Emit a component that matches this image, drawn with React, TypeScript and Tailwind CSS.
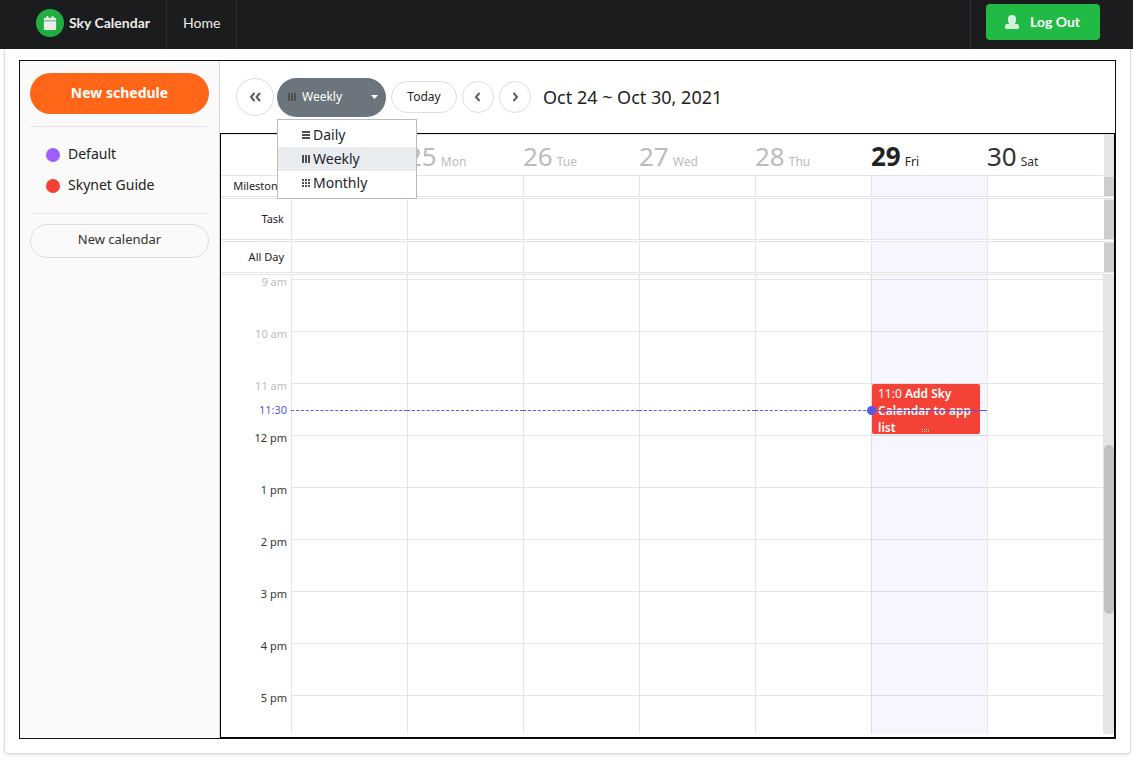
import React from "react";
import { FaCalendar } from "react-icons/fa";

type Day = { date: number; name: string };

const days: Day[] = [
  { date: 24, name: "Sun" },
  { date: 25, name: "Mon" },
  { date: 26, name: "Tue" },
  { date: 27, name: "Wed" },
  { date: 28, name: "Thu" },
  { date: 29, name: "Fri" },
  { date: 30, name: "Sat" },
];

const TODAY = 29;

const hours = ["9 am", "10 am", "11 am", "12 pm", "1 pm", "2 pm", "3 pm", "4 pm", "5 pm"];

function UserIcon() {
  return (
    <svg viewBox="0 0 14 14" className="h-3.5 w-3.5" fill="currentColor" aria-hidden="true">
      <path d="M7 0C9.500 0 11 1.300 11 3.500C11 5.600 11 7.300 10 8.200V9H12C13.400 9 14 10 14 11.200V12.500C14 13.500 13.300 14 12.500 14H1.500C.7 14 0 13.500 0 12.500V11.200C0 10 .6 9 2 9H4V8.200C3 7.300 3 5.600 3 3.500C3 1.300 4.500 0 7 0Z" />
    </svg>
  );
}

function ViewIcon({ view }: { view: string }) {
  return (
    <svg viewBox="0 0 8 8" className="h-2 w-2 shrink-0 text-[#4f4f4f]" fill="currentColor" shapeRendering="crispEdges" aria-hidden="true">
      {view === "Daily" && <path d="M0 0h8v2H0zM0 3h8v2H0zM0 6h8v2H0z" />}
      {view === "Weekly" && <path d="M0 0h2v8H0zM3 0h2v8H3zM6 0h2v8H6z" />}
      {view === "Monthly" && (
        <path d="M0 0h2v2H0zM3 0h2v2H3zM6 0h2v2H6zM0 3h2v2H0zM3 3h2v2H3zM6 3h2v2H6zM0 6h2v2H0zM3 6h2v2H3zM6 6h2v2H6z" />
      )}
    </svg>
  );
}

function Chevron({ d }: { d: string }) {
  return (
    <svg viewBox="0 0 12 12" className="h-3 w-3" fill="none" stroke="#5d5d5d" strokeWidth="2" aria-hidden="true">
      <path d={d} />
    </svg>
  );
}

function TopBar() {
  return (
    <header className="flex h-[49px] shrink-0 bg-[#1b1c1d] pl-5 text-[#ececec]" style={{ fontFamily: "Lato, sans-serif" }}>
      <a href="#brand" className="flex items-center gap-[5px] border-r border-[#2d2e2f] px-4 pb-1 text-sm font-bold">
        <span className="flex size-7 items-center justify-center rounded-full bg-[#21ae41]">
          <FaCalendar className="size-3.5" />
        </span>
        Sky Calendar
      </a>
      <a href="#home" className="flex items-center border-r border-[#2d2e2f] px-4 pb-1 text-sm">
        Home
      </a>
      <div className="ml-auto flex items-start border-l border-[#2d2e2f] pt-1 pr-[33px] pl-[15px]">
        <button className="flex h-9 items-center gap-[11px] rounded bg-[#21ba45] pr-5 pl-[19px] text-sm font-bold text-white">
          <span className="text-[#d3f1da]">
            <UserIcon />
          </span>
          Log Out
        </button>
      </div>
    </header>
  );
}

function CalendarToggle({ name, dot }: { name: string; dot: string }) {
  return (
    <label className="flex h-[31px] items-center gap-2 pl-4 text-sm">
      <input type="checkbox" defaultChecked className={"size-3.5 appearance-none rounded-full " + dot} />
      <span className="pb-0.5">{name}</span>
    </label>
  );
}

function Sidebar() {
  return (
    <aside className="w-[200px] shrink-0 border-r border-[#d5d5d5] bg-[#fafafa] px-2.5 pt-3">
      <button className="h-[41px] w-full rounded-full bg-[#ff6618] pb-0.5 text-sm font-bold text-white">New schedule</button>
      <div className="mt-3 border-y border-[#e5e5e5] pt-3 pb-3">
        <CalendarToggle name="Default" dot="bg-[#9e5fff]" />
        <CalendarToggle name="Skynet Guide" dot="bg-[#f44336]" />
      </div>
      <button className="mt-2.5 h-[34px] w-full rounded-full border border-[#ddd] pb-0.5 text-[13px] text-[#333]">New calendar</button>
    </aside>
  );
}

function ViewMenu() {
  return (
    <div className="relative">
      <button
        aria-haspopup="menu"
        aria-expanded="true"
        className="flex h-[39px] w-[109px] items-center rounded-full bg-[#6c757d] pr-2 pl-[11px] text-xs text-white"
      >
        <ViewIcon view="Weekly" />
        <span className="ml-1.5">Weekly</span>
        <svg viewBox="0 0 7 4" className="ml-auto h-1 w-[7px]" fill="currentColor" aria-hidden="true">
          <path d="M0 0h7L3.500 4z" />
        </svg>
      </button>
      <ul role="menu" className="absolute top-[41px] left-0 z-20 w-[140px] border border-[#bbb] bg-white py-[3px]">
        {["Daily", "Weekly", "Monthly"].map((view) => (
          <li key={view} role="none">
            <button
              role="menuitem"
              className={"flex h-6 w-full items-center gap-[3px] pl-6 text-sm text-[#212529] " + (view === "Weekly" ? "bg-[#e9ecef]" : "")}
            >
              <ViewIcon view={view} />
              {view}
            </button>
          </li>
        ))}
      </ul>
    </div>
  );
}

function Navigation() {
  const round = "flex items-center justify-center rounded-full border border-[#ddd] bg-white ";
  return (
    <nav className="flex h-[72px] shrink-0 items-center pl-4">
      <button aria-label="Toggle sidebar" className={round + "mr-[3px] size-[38px]"}>
        <Chevron d="M5.500 2L2 6L5.500 10M11 2L7.500 6L11 10" />
      </button>
      <ViewMenu />
      <button className={round + "mr-[5px] ml-[5px] h-8 w-[66px] text-xs text-[#212529]"}>Today</button>
      <button aria-label="Previous week" className={round + "mr-[5px] size-8"}>
        <Chevron d="M7.500 2L4 6L7.500 10" />
      </button>
      <button aria-label="Next week" className={round + "mr-3 size-8"}>
        <Chevron d="M4.500 2L8 6L4.500 10" />
      </button>
      <h1 className="text-lg">Oct 24 ~ Oct 30, 2021</h1>
    </nav>
  );
}

function dayTone(date: number) {
  if (date === TODAY) return "text-[#222]";
  return date < TODAY ? "text-[#bbb]" : "text-[#333]";
}

function DayHeader() {
  return (
    <div className="flex h-[42px] shrink-0 border-t border-[#e5e5e5]">
      <div className="flex min-w-0 flex-1 border-b border-[#e5e5e5] pl-[70px]">
        {days.map((day) => (
          <div key={day.date} className={"min-w-0 flex-1 whitespace-nowrap " + dayTone(day.date)}>
            <span className={"text-[26px] leading-[43px] " + (day.date === TODAY ? "font-bold" : "")}>{day.date}</span>
            <span className="ml-1 text-xs">{day.name}</span>
          </div>
        ))}
      </div>
      <div className="ml-px w-2.5 bg-[#e5e5e5]" />
    </div>
  );
}

function Panel({ title, height }: { title: string; height: string }) {
  return (
    <div className={"flex shrink-0 border-b border-[#e5e5e5] " + height}>
      <div className="flex w-[70px] shrink-0 items-center justify-end pr-[7px] text-[11px]">{title}</div>
      {days.map((day) => (
        <div key={day.date} className={"flex-1 border-l border-[#e5e5e5] " + (day.date === TODAY ? "bg-[#f6f6fe]" : "")} />
      ))}
      <div className="ml-px w-2.5 shrink-0 border-t border-[#e5e5e5] bg-[#cdcdcd]" />
    </div>
  );
}

function Splitter() {
  return <div className="h-0.5 shrink-0 border-b border-[#e5e5e5]" />;
}

function ScheduleCard() {
  return (
    <article className="absolute top-[109px] right-[7px] left-0 h-[50px] overflow-hidden rounded-xs bg-[#f44336] px-1.5 pt-px text-xs leading-[17px] text-white">
      11:0 <strong className="font-semibold">Add Sky Calendar to app list</strong>
      <svg viewBox="0 0 8 3" className="absolute bottom-0.5 left-1/2 h-[3px] w-2 -translate-x-1/2" fill="#fbbab5" shapeRendering="crispEdges" aria-hidden="true">
        <path d="M0 0h1v1H0zM2 0h1v1H2zM4 0h1v1H4zM6 0h1v1H6zM0 2h1v1H0zM2 2h1v1H2zM4 2h1v1H4zM6 2h1v1H6z" />
      </svg>
    </article>
  );
}

function DayColumn({ day }: { day: Day }) {
  const today = day.date === TODAY;
  return (
    <div className={"relative flex-1 border-l pt-1 " + (today ? "border-[#dcdce8] bg-[#f6f6fe]" : "border-[#e5e5e5]")}>
      {hours.map((hour) => (
        <div key={hour} className={"h-[52px] border-t " + (today ? "border-[#dcdce8]" : "border-[#e5e5e5]")} />
      ))}
      {today && <ScheduleCard />}
      {day.date < TODAY && <div className="absolute top-[135px] right-0 -left-px border-t border-dashed border-[#515ce6]" />}
      {today && (
        <div className="absolute top-[135px] -right-px left-0 border-t border-[#515ce6]">
          <span className="absolute -top-[5px] -left-[5px] size-[9px] rounded-full bg-[#515ce6]" />
        </div>
      )}
    </div>
  );
}

function TimeGrid() {
  return (
    <div className="relative mb-[3px] flex min-h-0 flex-1 overflow-hidden">
      <div className="relative w-[70px] shrink-0 pr-1 text-right text-[11px] leading-[13px]">
        {hours.map((hour, i) => (
          <div key={hour} className={"h-[52px] " + (i < 3 ? "text-[#bbb]" : "text-[#333]")}>
            {hour}
          </div>
        ))}
        <div className="absolute top-32 right-1 text-[#515ce6]">11:30</div>
      </div>
      {days.map((day) => (
        <DayColumn key={day.date} day={day} />
      ))}
      <div className="w-[11px] shrink-0 bg-[#e5e5e5] pt-[170px] pl-px">
        <div className="h-[169px] rounded-full bg-[#c1c1c1]" />
      </div>
    </div>
  );
}

export default function App() {
  return (
    <div className="flex h-screen min-h-[600px] flex-col bg-white text-[#222]" style={{ fontFamily: '"Noto Sans", sans-serif' }}>
      <TopBar />
      <main className="mr-0.5 mb-1.5 ml-1 flex min-h-0 flex-1 flex-col rounded-b border border-t-0 border-[#dedede] px-3.5 pt-[11px] pb-3.5 shadow-sm">
        <div className="flex min-h-0 flex-1 border border-[#111]">
          <Sidebar />
          <div className="flex min-w-0 flex-1 flex-col">
            <Navigation />
            <section aria-label="Week" className="flex min-h-0 flex-1 flex-col border border-black">
              <DayHeader />
              <Panel title="Milestone" height="h-[21px]" />
              <Splitter />
              <Panel title="Task" height="h-[41px]" />
              <Splitter />
              <Panel title="All Day" height="h-[31px]" />
              <Splitter />
              <TimeGrid />
            </section>
          </div>
        </div>
      </main>
    </div>
  );
}
